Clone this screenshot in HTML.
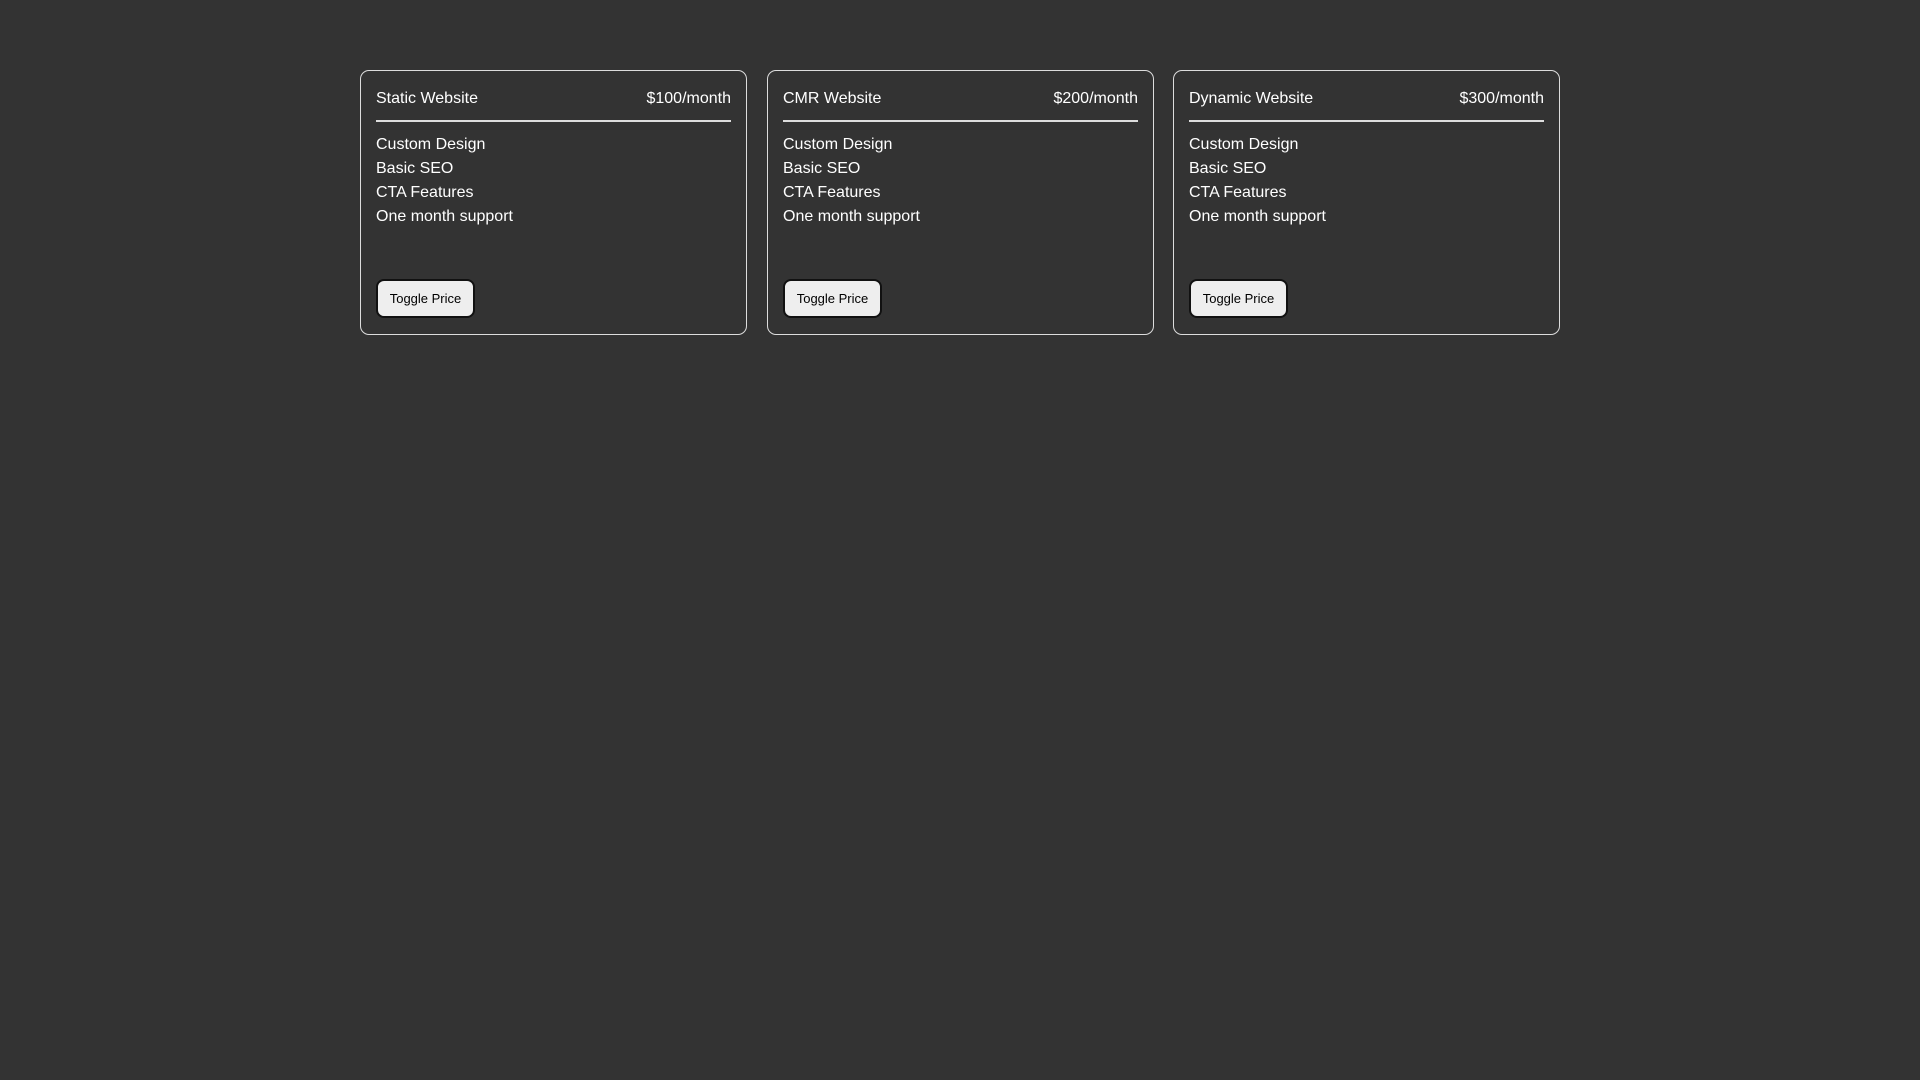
<!DOCTYPE html>
<html><head><style>
body{margin:0;background:#333;font-family:"Liberation Sans",sans-serif;color:#fff;width:1920px;height:1080px;overflow:hidden}
.card{position:absolute;top:70px;width:385px;height:263px;border:1px solid #ddd;border-radius:9px;box-sizing:content-box}
.in{position:absolute;left:15px;right:15px;top:0;bottom:0}
.hd{position:absolute;top:18px;left:0;right:0;height:20px;line-height:20px;font-size:16px;display:flex;justify-content:space-between}
.hr{position:absolute;top:49px;left:0;right:0;height:2px;background:#ddd}
ul{position:absolute;top:62px;left:0;margin:0;padding:0;list-style:none;font-size:16px;line-height:24px}
button{position:absolute;left:0;top:208px;width:99px;height:39px;background:#eee;border:2px solid #111;border-radius:8px;font-family:"Liberation Sans",sans-serif;font-size:13px;color:#000;padding:0}
</style></head><body>
<div class="card" style="left:360px"><div class="in"><div class="hd"><span>Static Website</span><span>$100/month</span></div><div class="hr"></div><ul><li>Custom Design</li><li>Basic SEO</li><li>CTA Features</li><li>One month support</li></ul><button>Toggle Price</button></div></div>
<div class="card" style="left:767px"><div class="in"><div class="hd"><span>CMR Website</span><span>$200/month</span></div><div class="hr"></div><ul><li>Custom Design</li><li>Basic SEO</li><li>CTA Features</li><li>One month support</li></ul><button>Toggle Price</button></div></div>
<div class="card" style="left:1173px"><div class="in"><div class="hd"><span>Dynamic Website</span><span>$300/month</span></div><div class="hr"></div><ul><li>Custom Design</li><li>Basic SEO</li><li>CTA Features</li><li>One month support</li></ul><button>Toggle Price</button></div></div>
</body></html>
